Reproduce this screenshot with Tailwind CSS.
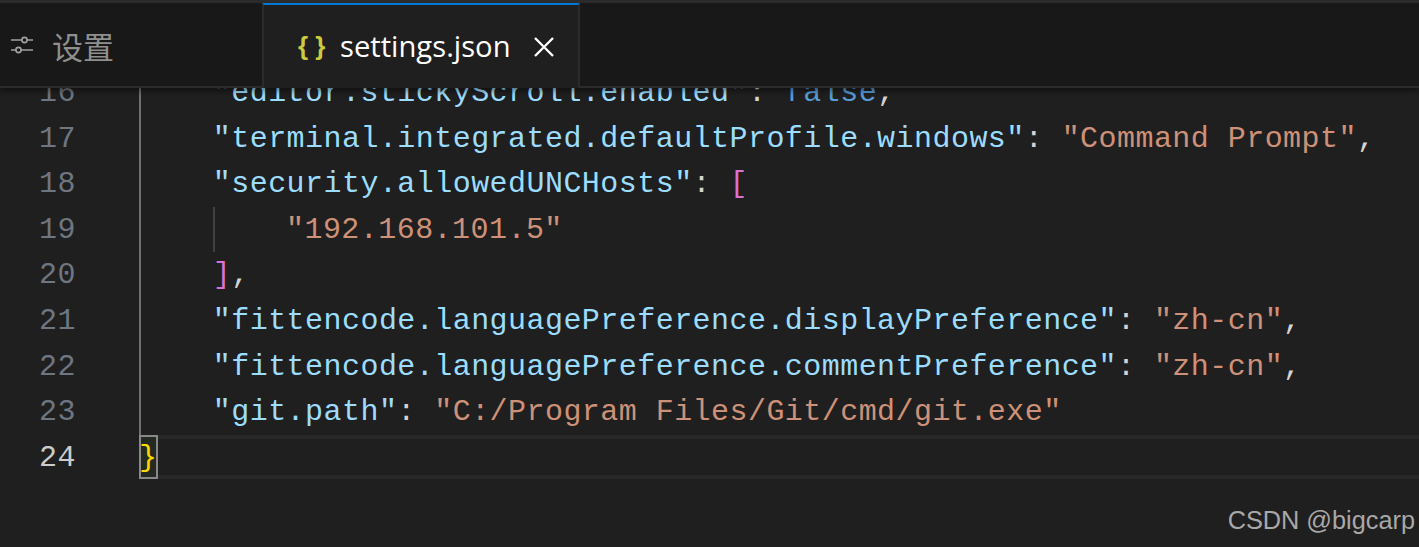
<!DOCTYPE html>
<html lang="zh-CN">
<head>
    <meta charset="UTF-8">
    <title>settings.json</title>
    <script src="https://cdn.jsdelivr.net/npm/@tailwindcss/browser@4"></script>
</head>
<body class="bg-[#1f1f1f] w-[1419px] h-[547px] overflow-hidden">

<!-- Tab bar -->
<div class="relative z-10 flex h-[88px] bg-[#181818] border-t-[3px] border-b-2 border-[#2b2b2b] shadow-[0_3px_6px_rgba(0,0,0,0.45)]">
    <div class="flex items-center w-[262px] pl-[10px] text-[#8f8f8f]">
        <svg width="24" height="24" viewBox="0 0 24 24" fill="none" stroke="#a0a0a0" stroke-width="1.6">
            <path d="M1 7h11M17 7h6M1 17h5M11 17h12"/>
            <circle cx="14.5" cy="7" r="2.6"/>
            <circle cx="8.5" cy="17" r="2.6"/>
        </svg>
        <span class="ml-[18px] mt-[4px] text-[31px] font-['Noto_Sans_CJK_SC',sans-serif]">设置</span>
    </div>
    <div class="flex items-center w-[318px] -mb-[2px] pl-[34px] bg-[#1f1f1f] border-x-2 border-[#2b2b2b] border-t-2 border-t-[#0078d4]">
        <span class="w-[28px] text-[26px] font-bold text-[#cbcb41] font-['Liberation_Sans',sans-serif]">{ }</span>
        <span class="ml-[14px] text-[29.2px] text-white font-['Open_Sans',sans-serif]">settings.json</span>
        <svg class="ml-[22px]" width="22" height="22" viewBox="0 0 22 22" fill="none" stroke="#ffffff" stroke-width="2.4">
            <path d="M2 2l18 18M20 2L2 20"/>
        </svg>
    </div>
</div>

<!-- Editor -->
<div class="flex flex-col -mt-[18px] text-[30px] tracking-[0.45px] leading-[47.6px] font-['Liberation_Mono',monospace] text-[#d4d4d4]">
    <div class="flex h-[45.6px]">
        <div class="w-[76px] text-right text-[#6e7681]">16</div>
        <div class="ml-[63px] border-l-2 border-[#707070] whitespace-pre indent-[-2px]"><span class="text-[#9cdcfe]">    "editor.stickyScroll.enabled"</span>: <span class="text-[#569cd6]">false</span>,</div>
    </div>
    <div class="flex h-[45.6px]">
        <div class="w-[76px] text-right text-[#6e7681]">17</div>
        <div class="ml-[63px] border-l-2 border-[#707070] whitespace-pre indent-[-2px]"><span class="text-[#9cdcfe]">    "terminal.integrated.defaultProfile.windows"</span>: <span class="text-[#ce9178]">"Command Prompt"</span>,</div>
    </div>
    <div class="flex h-[45.6px]">
        <div class="w-[76px] text-right text-[#6e7681]">18</div>
        <div class="ml-[63px] border-l-2 border-[#707070] whitespace-pre indent-[-2px]"><span class="text-[#9cdcfe]">    "security.allowedUNCHosts"</span>: <span class="text-[#da70d6]">[</span></div>
    </div>
    <div class="flex h-[45.6px]">
        <div class="w-[76px] text-right text-[#6e7681]">19</div>
        <div class="ml-[63px] flex border-l-2 border-[#707070]">
            <div class="w-[72px]"></div>
            <div class="border-l-2 border-[#404040] pl-[72px] text-[#ce9178] whitespace-pre indent-[-1px]">"192.168.101.5"</div>
        </div>
    </div>
    <div class="flex h-[45.6px]">
        <div class="w-[76px] text-right text-[#6e7681]">20</div>
        <div class="ml-[63px] border-l-2 border-[#707070] whitespace-pre indent-[-2px]">    <span class="text-[#da70d6]">]</span>,</div>
    </div>
    <div class="flex h-[45.6px]">
        <div class="w-[76px] text-right text-[#6e7681]">21</div>
        <div class="ml-[63px] border-l-2 border-[#707070] whitespace-pre indent-[-2px]"><span class="text-[#9cdcfe]">    "fittencode.languagePreference.displayPreference"</span>: <span class="text-[#ce9178]">"zh-cn"</span>,</div>
    </div>
    <div class="flex h-[45.6px]">
        <div class="w-[76px] text-right text-[#6e7681]">22</div>
        <div class="ml-[63px] border-l-2 border-[#707070] whitespace-pre indent-[-2px]"><span class="text-[#9cdcfe]">    "fittencode.languagePreference.commentPreference"</span>: <span class="text-[#ce9178]">"zh-cn"</span>,</div>
    </div>
    <div class="flex h-[45.6px]">
        <div class="w-[76px] text-right text-[#6e7681]">23</div>
        <div class="ml-[63px] border-l-2 border-[#707070] whitespace-pre indent-[-2px]"><span class="text-[#9cdcfe]">    "git.path"</span>: <span class="text-[#ce9178]">"C:/Program Files/Git/cmd/git.exe"</span></div>
    </div>
    <div class="flex h-[45.6px]">
        <div class="w-[76px] text-right text-[#cccccc]">24</div>
        <div class="ml-[63px] flex-1 flex h-[44px] border-y-4 border-[#282828]">
            <div class="w-[19px] h-[44px] -my-[4px] border-2 border-[#888888] bg-[#222a22] text-[#ffd700] leading-[42px] indent-[-2px]">}</div>
        </div>
    </div>
</div>

<!-- Watermark -->
<div class="mt-[22px] pr-[4px] text-right text-[25.3px] text-[#a8a8a8] font-['Liberation_Sans',sans-serif]">CSDN @bigcarp</div>

</body>
</html>
